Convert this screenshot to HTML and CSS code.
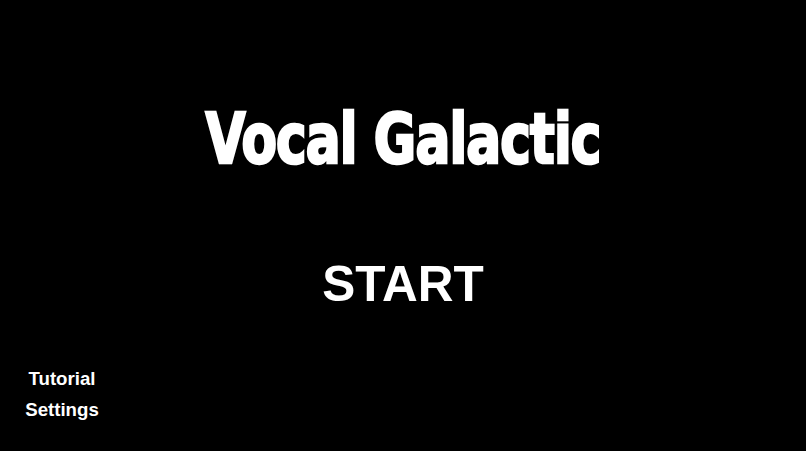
FILE: index.html
```html
<!DOCTYPE html>
<html>
<head>
<meta charset="utf-8">
<link rel="stylesheet" href="styles.css">
</head>
<body>
<div class="screen">
  <div class="title-wrap"><h1 class="title">Vocal Galactic</h1></div>
  <div class="start">START</div>
  <nav class="menu">
    <div class="menu-item">Tutorial</div>
    <div class="menu-item">Settings</div>
  </nav>
</div>
</body>
</html>
```
FILE: styles.css
```css
html, body {
  margin: 0;
  padding: 0;
  background: #000;
}
.screen {
  width: 806px;
  height: 451px;
  background: #000;
  color: #fff;
  display: flex;
  flex-direction: column;
  align-items: center;
  overflow: hidden;
}
.title-wrap {
  margin-top: 103px;
  height: 72px;
  display: flex;
  justify-content: center;
  width: 100%;
}
.title {
  margin: 0;
  font-family: Impact, "DejaVu Sans Condensed", "DejaVu Sans", sans-serif;
  font-weight: bold;
  font-size: 70px;
  line-height: 72px;
  letter-spacing: -1px;
  white-space: nowrap;
  -webkit-text-stroke: 2.6px #fff;
  transform: scaleX(0.82);
}
.start {
  margin-top: 85px;
  font-family: "Liberation Sans", Arial, sans-serif;
  font-weight: bold;
  font-size: 49.5px;
  line-height: 48px;
}
.menu {
  margin-top: auto;
  align-self: flex-start;
  width: 124px;
  padding-bottom: 26px;
  text-align: center;
  font-family: "Liberation Sans", Arial, sans-serif;
  font-weight: bold;
  font-size: 18.67px;
  line-height: 31px;
}
```
